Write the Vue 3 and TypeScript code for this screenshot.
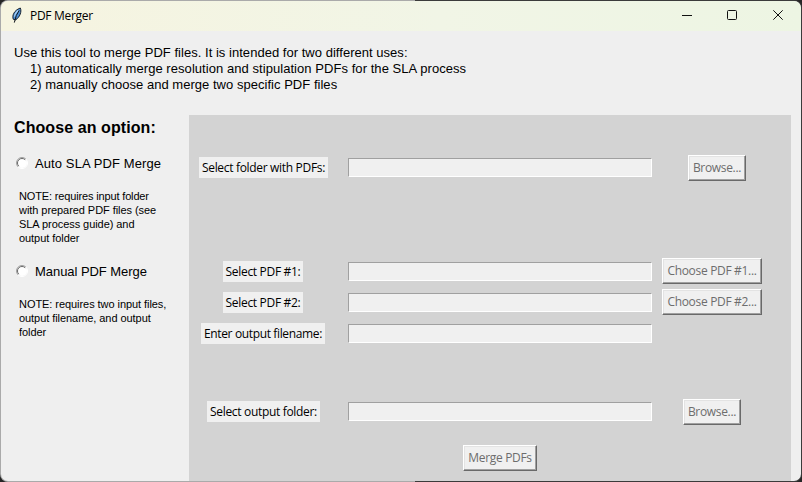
<script setup lang="ts">
import { ref } from 'vue'

interface Row {
  id: string
  label: string
  button?: string
}

const mode = ref<string>('')

const intro: string[] = [
  'Use this tool to merge PDF files. It is intended for two different uses:',
  '1) automatically merge resolution and stipulation PDFs for the SLA process',
  '2) manually choose and merge two specific PDF files',
]

const options = [
  {
    id: 'auto',
    label: 'Auto SLA PDF Merge',
    note: ['NOTE: requires input folder', 'with prepared PDF files (see', 'SLA process guide) and', 'output folder'],
  },
  {
    id: 'manual',
    label: 'Manual PDF Merge',
    note: ['NOTE: requires two input files,', 'output filename, and output', 'folder'],
  },
]

const rows: Row[] = [
  { id: 'folder', label: 'Select folder with PDFs:', button: 'Browse...' },
  { id: 'first', label: 'Select PDF #1:', button: 'Choose PDF #1...' },
  { id: 'second', label: 'Select PDF #2:', button: 'Choose PDF #2...' },
  { id: 'filename', label: 'Enter output filename:' },
  { id: 'output', label: 'Select output folder:', button: 'Browse...' },
]
</script>

<template>
  <div class="frame">
    <div class="window">
      <header class="titlebar">
        <svg class="feather" width="12" height="17" viewBox="0 0 12 17">
          <path d="M2.3 12.3 C.8 8.6 3 3.4 9.3 1 C11 4.6 8.8 10.2 4.6 12.9 Z" fill="#4b8fd6" stroke="#17202c" stroke-width="1" />
          <path d="M7.2 3.2 Q4 6.2 3.5 9.6" fill="none" stroke="#a9d0f2" stroke-width="1.3" />
          <path d="M8.2 3.4 Q4.8 7.6 3.3 15.6" fill="none" stroke="#10151c" stroke-width="1" />
        </svg>
        <span class="title">PDF Merger</span>
        <svg class="controls" width="104" height="12" viewBox="0 0 104 12" fill="none" stroke="#111" stroke-width="1">
          <path d="M0 6.5H10" />
          <rect x="45.5" y="1.5" width="9" height="9" rx="1" />
          <path d="M91.3 1.3L100.7 10.7M100.7 1.3L91.3 10.7" />
        </svg>
      </header>

      <div class="intro">
        <p v-for="(line, i) in intro" :key="i" :class="['line', 'line-' + i]">{{ line }}</p>
      </div>

      <div class="body">
        <aside class="options">
          <h1>Choose an option:</h1>
          <section v-for="o in options" :key="o.id" :class="['option', o.id]">
            <label class="choice">
              <input v-model="mode" type="radio" name="mode" :value="o.id" />
              <svg width="12" height="12" viewBox="0 0 12 12">
                <circle cx="6" cy="6" r="5" fill="#fff" />
                <path d="M2.1 9.9A5.5 5.5 0 0 1 9.9 2.1" fill="none" stroke="#a0a0a0" />
                <path d="M2.8 9.2A4.5 4.5 0 0 1 9.2 2.8" fill="none" stroke="#696969" />
                <path d="M2.1 9.9A5.5 5.5 0 0 0 9.9 2.1" fill="none" stroke="#fff" />
              </svg>
              <span>{{ o.label }}</span>
            </label>
            <p class="note"><span v-for="n in o.note" :key="n">{{ n }}</span></p>
          </section>
        </aside>

        <main class="panel">
          <div v-for="r in rows" :key="r.id" :class="['row', r.id]">
            <div class="caption-cell"><span class="caption">{{ r.label }}</span></div>
            <input class="entry" type="text" disabled />
            <div class="action"><button v-if="r.button" disabled>{{ r.button }}</button></div>
          </div>
          <button class="merge" disabled>Merge PDFs</button>
        </main>
      </div>
    </div>
  </div>
</template>

<style>
body {
  background: #262626;
}
</style>

<style scoped>
* {
  box-sizing: border-box;
}
.frame {
  width: 802px;
  height: 482px;
  padding: 1px;
  border-radius: 8px;
  overflow: hidden;
  background: linear-gradient(90deg, #aaa 0 415px, #3b3b3b 415px);
}
.window {
  height: 480px;
  border-radius: 7px;
  overflow: hidden;
  background: #efefef;
  color: #000;
  display: flex;
  flex-direction: column;
}
.titlebar {
  height: 30px;
  flex: none;
  display: flex;
  align-items: center;
  padding: 0 18px 0 10px;
  background: linear-gradient(90deg, #f6f4e0, #f1f5e6 55%, #edf5e3);
}
.feather {
  margin-top: -2px;
}
.title {
  margin-left: 7px;
  font: 12px/16px 'Open Sans', 'Noto Sans', sans-serif;
  letter-spacing: -0.3px;
}
.controls {
  margin-left: auto;
  margin-right: -3px;
  margin-top: -2px;
}
.intro {
  height: 84px;
  flex: none;
  padding: 14px 0 0 13px;
  font: 13px/16px 'Liberation Sans', Arial, sans-serif;
}
.line {
  margin: 0;
  white-space: nowrap;
  letter-spacing: 0.03px;
}
.line-1,
.line-2 {
  padding-left: 16px;
}
.line-1 {
  letter-spacing: 0.055px;
}
.body {
  flex: 1;
  display: flex;
}
.options {
  width: 188px;
  padding: 3px 0 0 13px;
  font-family: 'Liberation Sans', Arial, sans-serif;
}
h1 {
  margin: 0;
  font-size: 16px;
  line-height: 20px;
  font-weight: bold;
  letter-spacing: 0.08px;
}
.option {
  height: 108px;
  padding-top: 16px;
}
.choice {
  display: flex;
  align-items: center;
  height: 18px;
  margin-left: 2px;
  font-size: 13px;
  white-space: nowrap;
}
.auto .choice {
  letter-spacing: 0.1px;
}
.manual .choice {
  letter-spacing: -0.05px;
}
.choice input {
  appearance: none;
  width: 0;
  height: 0;
  margin: 0;
}
.choice span {
  margin-left: 7px;
}
.note {
  margin: 17px 0 0 5px;
  font-size: 11px;
  line-height: 14px;
  letter-spacing: -0.06px;
}
.note span {
  display: block;
  white-space: nowrap;
}
.auto .note span:first-child {
  letter-spacing: -0.15px;
}
.panel {
  width: 602px;
  height: 366px;
  padding-top: 40px;
  background: #d3d3d3;
  font: 12px/17px 'Open Sans', 'Noto Sans', sans-serif;
  letter-spacing: -0.32px;
}
.row {
  height: 31px;
  display: grid;
  grid-template-columns: 149px 304px 100px;
  column-gap: 10px;
}
.row.folder {
  height: 104px;
}
.row.filename {
  height: 78px;
}
.row.output {
  height: 46px;
}
.caption-cell {
  display: flex;
  justify-content: center;
  align-items: flex-start;
  padding-top: 2px;
}
.caption {
  height: 21px;
  padding: 2px 0;
  text-align: center;
  white-space: nowrap;
  background: #f0f0f0;
}
.folder .caption {
  width: 129px;
}
.first .caption,
.second .caption {
  width: 80px;
  margin-right: 1px;
}
.filename .caption {
  width: 124px;
  margin-right: 1px;
  letter-spacing: -0.36px;
}
.output .caption {
  width: 113px;
}
.entry {
  width: 304px;
  height: 19px;
  margin: 3px 0 0;
  padding: 0;
  border: 1px solid;
  border-color: #a0a0a0 #fff #fff #a0a0a0;
  border-radius: 0;
  background: #f0f0f0;
}
.action {
  display: flex;
  justify-content: center;
  align-items: flex-start;
}
.first .action,
.second .action {
  margin-top: -1px;
}
.folder .action {
  padding-left: 10px;
}
button {
  width: 58px;
  height: 26px;
  flex: none;
  padding: 0 0 2px;
  border: 1px solid;
  border-color: #fff #696969 #696969 #fff;
  border-radius: 0;
  box-shadow: inset -1px -1px #a0a0a0, inset 1px 1px #e3e3e3;
  background: #f0f0f0;
  color: #6d6d6d;
  font: inherit;
  letter-spacing: inherit;
  white-space: nowrap;
}
.first button,
.second button {
  width: 100px;
}
.merge {
  display: block;
  width: 74px;
  margin-left: 274px;
}
</style>
